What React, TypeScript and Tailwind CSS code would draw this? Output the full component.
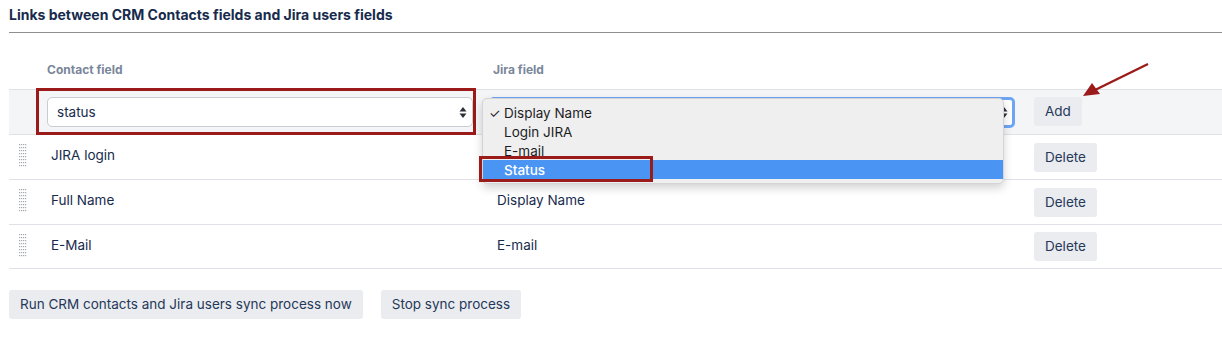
import React from 'react';

const rows = [
  { contact: 'JIRA login', jira: 'Login JIRA' },
  { contact: 'Full Name', jira: 'Display Name' },
  { contact: 'E-Mail', jira: 'E-mail' },
];

const options = ['Display Name', 'Login JIRA', 'E-mail', 'Status'];

function UpDown() {
  return (
    <svg width="8" height="13" viewBox="0 0 8 13" className="shrink-0">
      <path d="M4 1 L7.5 5.5 H0.5 Z" fill="#2b2f3a" />
      <path d="M4 12 L7.5 7.5 H0.5 Z" fill="#2b2f3a" />
    </svg>
  );
}

function DragHandle() {
  const dots = [];
  for (let r = 0; r < 8; r++) {
    for (let c = 0; c < 4; c++) {
      dots.push(<rect key={`${r}-${c}`} x={c * 2} y={r * 3} width="1.2" height="1.2" fill="#a5a8ad" />);
    }
  }
  return (
    <svg width="8" height="24" viewBox="0 0 8 24">
      {dots}
    </svg>
  );
}

function Btn({ children, className = '' }: { children: React.ReactNode; className?: string }) {
  return (
    <button className={`h-[29px] rounded-[3px] bg-[#ebecf0] px-[11px] text-[13.5px] text-[#253858] ${className}`}>
      {children}
    </button>
  );
}

export default function App() {
  return (
    <div
      className="relative h-[360px] w-[1222px] overflow-hidden bg-white"
      style={{ fontFamily: 'Inter, "Noto Sans", sans-serif' }}
    >
      <div className="pl-[9px]">
        <h3 className="pt-[6px] pb-[9px] text-[14px] font-bold leading-[17px] text-[#172b4d]">
          Links between CRM Contacts fields and Jira users fields
        </h3>
        <div className="h-px bg-[#8f8f8f]" />

        {/* headers */}
        <div className="grid grid-cols-[38px_442px_545px_1fr] pt-[29px] pb-[11px] text-[12px] font-bold leading-[16px] text-[#7a869a]">
          <div />
          <div>Contact field</div>
          <div className="pl-[4px]">Jira field</div>
          <div />
        </div>

        {/* add row */}
        <div className="grid h-[45px] grid-cols-[38px_442px_545px_1fr] items-center border-t border-[#dfe1e6] bg-[#f4f5f7]">
          <div />
          <div>
            <div className="flex h-[30px] w-[426px] items-center justify-between rounded-[5px] border border-[#c9ccd2] bg-white pl-[9px] pr-[5px] text-[13.5px] text-[#172b4d]">
              <span>status</span>
              <UpDown />
            </div>
          </div>
          <div>
            <div className="flex h-[31px] w-[526px] items-center justify-end rounded-[5px] border-[3px] border-[#6fa6f3] bg-white pr-[4px]">
              <UpDown />
            </div>
          </div>
          <div className="pb-[2px]">
            <Btn>Add</Btn>
          </div>
        </div>

        {rows.map((r, i) => (
          <div
            key={r.contact}
            className={`grid h-[45px] grid-cols-[38px_442px_545px_1fr] items-center border-t border-[#dfe1e6] ${
              i === rows.length - 1 ? 'border-b' : ''
            }`}
          >
            <div className="pl-[10px] pb-[2px]">
              <DragHandle />
            </div>
            <div className="pl-[4px] pb-[3px] text-[13.5px] text-[#172b4d]">{r.contact}</div>
            <div className="pl-[8px] pb-[3px] text-[13.5px] text-[#172b4d]">{r.jira}</div>
            <div>
              <Btn>Delete</Btn>
            </div>
          </div>
        ))}

        <div className="flex gap-[18px] pt-[21px]">
          <Btn>Run CRM contacts and Jira users sync process now</Btn>
          <Btn>Stop sync process</Btn>
        </div>
      </div>

      {/* red highlight around contact select */}
      <div className="absolute left-[36px] top-[88px] h-[47px] w-[440px] border-[3px] border-[#9b1a1a]" />

      {/* open dropdown */}
      <div className="absolute left-[482px] top-[98px] w-[522px] overflow-hidden rounded-[5px] border border-[#d4d4d6] bg-[#efeff0] py-[4px] shadow-[0_4px_10px_rgba(0,0,0,0.18)]">
        {options.map((o, i) => (
          <div
            key={o}
            className={`flex h-[19px] items-center text-[13.5px] leading-[16px] ${
              i === 3 ? 'bg-[#4a95f3] font-medium text-white' : 'text-[#1d1d1f]'
            }`}
          >
            <span className="w-[21px] pl-[6px] text-[13px]">{i === 0 ? '✓' : ''}</span>
            <span>{o}</span>
          </div>
        ))}
      </div>
      <div className="absolute left-[479px] top-[156px] h-[26px] w-[174px] border-[3px] border-[#9b1a1a]" />

      {/* red arrow */}
      <svg className="absolute left-[1075px] top-[58px]" width="80" height="45" viewBox="0 0 80 45">
        <line x1="73" y1="6" x2="20" y2="32" stroke="#9b1a1a" strokeWidth="2.4" />
        <path d="M8 38 L17 25 L25 36 Z" fill="#9b1a1a" />
      </svg>
    </div>
  );
}
